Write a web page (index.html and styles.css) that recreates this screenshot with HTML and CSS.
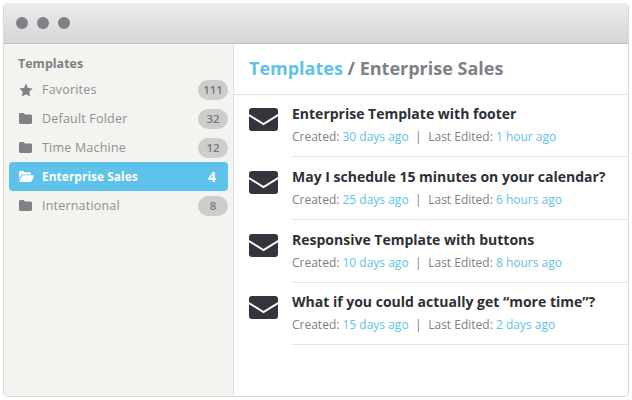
FILE: index.html
```html
<!DOCTYPE html>
<html lang="en">
<head>
    <meta charset="UTF-8">
    <title>Templates</title>
    <link rel="stylesheet" href="styles.css">
</head>
<body>
    <svg class="icon-defs" width="0" height="0">
        <symbol id="star" viewBox="0 0 14 14"><path d="M7 .6l2 4.3 4.7.6-3.4 3.3.8 4.7L7 11.2l-4.1 2.3.8-4.7L.3 5.5 5 4.9z"/></symbol>
        <symbol id="folder" viewBox="0 0 13 11"><path d="M1.5 0h3.2l1.3 1.5h5.500c.8 0 1.500.6 1.500 1.400v6.600c0 .8-.7 1.500-1.500 1.500h-10C.7 11 0 10.300 0 9.500v-8C0 .6.700 0 1.500 0z"/></symbol>
        <symbol id="folder-open" viewBox="0 0 15 11"><path d="M0 8.600V1.300C0 .6.600 0 1.300 0h3l1.200 1.300h5.200c.7 0 1.300.6 1.300 1.300v.8H4c-.8 0-1.500.4-1.900 1.100zM3.100 5c.3-.5.800-.7 1.300-.7h9.700c.7 0 1.100.7.800 1.300l-2.300 4.600c-.3.500-.8.800-1.300.8H1.200c-.7 0-1.100-.7-.8-1.300z"/></symbol>
        <symbol id="mail" viewBox="0 0 29 23"><rect width="29" height="23" rx="3"/><path d="M-1 6.500L14.500 16 30 6.500" fill="none" stroke="#fff" stroke-width="2"/></symbol>
    </svg>

    <div class="window">
        <div class="titlebar">
            <span class="dot"></span>
            <span class="dot"></span>
            <span class="dot"></span>
        </div>
        <div class="content">
            <aside class="sidebar">
                <h2>Templates</h2>
                <ul class="folders">
                    <li><svg class="ico ico-star"><use href="#star"/></svg><span class="name">Favorites</span><span class="badge">111</span></li>
                    <li><svg class="ico"><use href="#folder"/></svg><span class="name">Default Folder</span><span class="badge">32</span></li>
                    <li><svg class="ico"><use href="#folder"/></svg><span class="name">Time Machine</span><span class="badge">12</span></li>
                    <li class="active"><svg class="ico ico-open"><use href="#folder-open"/></svg><span class="name">Enterprise Sales</span><span class="badge">4</span></li>
                    <li><svg class="ico"><use href="#folder"/></svg><span class="name">International</span><span class="badge">8</span></li>
                </ul>
            </aside>
            <main class="main">
                <h1><a href="#">Templates</a> / Enterprise Sales</h1>
                <ul class="templates">
                    <li>
                        <svg class="mail"><use href="#mail"/></svg>
                        <div class="info">
                            <h3>Enterprise Template with footer</h3>
                            <p>Created: <a href="#">30 days ago</a><span class="sep">|</span>Last Edited: <a href="#">1 hour ago</a></p>
                        </div>
                    </li>
                    <li>
                        <svg class="mail"><use href="#mail"/></svg>
                        <div class="info">
                            <h3>May I schedule 15 minutes on your calendar?</h3>
                            <p>Created: <a href="#">25 days ago</a><span class="sep">|</span>Last Edited: <a href="#">6 hours ago</a></p>
                        </div>
                    </li>
                    <li>
                        <svg class="mail"><use href="#mail"/></svg>
                        <div class="info">
                            <h3>Responsive Template with buttons</h3>
                            <p>Created: <a href="#">10 days ago</a><span class="sep">|</span>Last Edited: <a href="#">8 hours ago</a></p>
                        </div>
                    </li>
                    <li>
                        <svg class="mail"><use href="#mail"/></svg>
                        <div class="info">
                            <h3>What if you could actually get “more time”?</h3>
                            <p>Created: <a href="#">15 days ago</a><span class="sep">|</span>Last Edited: <a href="#">2 days ago</a></p>
                        </div>
                    </li>
                </ul>
            </main>
        </div>
    </div>
</body>
</html>
```

FILE: styles.css
```css
body {
    margin: 0;
    padding: 3px;
    background: #fff;
    font-family: "Open Sans", sans-serif;
    width: 626px;
    height: 394px;
}

.icon-defs {
    display: none;
}

.window {
    box-sizing: border-box;
    width: 626px;
    height: 394px;
    border: 1px solid #d8d8d8;
    border-top: none;
    border-radius: 5px;
    background: #fff;
    display: flex;
    flex-direction: column;
    overflow: hidden;
}

.titlebar {
    box-sizing: border-box;
    height: 41px;
    flex: none;
    display: flex;
    align-items: center;
    gap: 9px;
    padding: 0 0 0 12px;
    background: linear-gradient(to bottom, #ececec, #d6d6d6);
    border-bottom: 1px solid #bdbdbd;
}

.dot {
    width: 12px;
    height: 12px;
    border-radius: 50%;
    background: #808087;
}

.content {
    flex: 1;
    display: flex;
}

.sidebar {
    box-sizing: border-box;
    width: 230px;
    flex: none;
    padding: 11px 5px 0 5px;
    background: #f3f3ef;
    border-right: 1px solid #e3e3e3;
}

.sidebar h2 {
    margin: 0 0 3px 9px;
    font-size: 12.500px;
    line-height: 17px;
    font-weight: 700;
    color: #808087;
}

.folders {
    list-style: none;
    margin: 0;
    padding: 0;
}

.folders li {
    height: 29px;
    display: flex;
    align-items: center;
    padding: 0 0 0 10px;
    font-size: 12.500px;
    color: #909094;
    border-radius: 4px;
}

.ico {
    width: 13px;
    height: 11px;
    flex: none;
    margin-right: 10px;
    fill: #808087;
}

.ico-star {
    width: 14px;
    height: 14px;
    margin-right: 9px;
}

.ico-open {
    width: 15px;
    margin-right: 8px;
}

.name {
    flex: 1;
    letter-spacing: 0.2px;
}

.badge {
    width: 30px;
    height: 20px;
    line-height: 20px;
    border-radius: 10px;
    background: #cdcdcb;
    color: #77777b;
    font-size: 11.500px;
    font-weight: 600;
    text-align: center;
}

.folders li.active {
    background: #5ec2ea;
    color: #fff;
    font-weight: 700;
}

.active .name {
    font-size: 12px;
    letter-spacing: 0;
}

.active .ico {
    fill: #fff;
}

.active .badge {
    background: none;
    color: #fff;
    font-size: 14px;
    font-weight: 700;
    margin-right: 1px;
}

.main {
    flex: 1;
    min-width: 0;
}

.main h1 {
    box-sizing: border-box;
    height: 50.630px;
    margin: 0;
    padding: 11px 0 0 15px;
    font-size: 18px;
    line-height: 26px;
    font-weight: 700;
    color: #808087;
    border-bottom: 1px solid #e3e3e3;
}

.main h1 a {
    color: #5ec2ea;
    text-decoration: none;
}

.templates {
    list-style: none;
    margin: 0;
    padding: 0;
}

.templates li {
    display: flex;
    height: 62.670px;
}

.mail {
    width: 29px;
    height: 23px;
    flex: none;
    margin: 13.670px 14px 0 15px;
    fill: #33343c;
}

.info {
    flex: 1;
    box-sizing: border-box;
    padding-top: 9.670px;
    border-bottom: 1px solid #e3e3e3;
}

.info h3 {
    margin: 0;
    font-size: 14px;
    line-height: 20px;
    font-weight: 700;
    color: #2e2f36;
}

.info p {
    margin: 4px 0 0;
    font-size: 12px;
    line-height: 17px;
    color: #808087;
}

.info a {
    color: #5ec2ea;
    text-decoration: none;
}

.sep {
    margin: 0 6.500px;
}
```
